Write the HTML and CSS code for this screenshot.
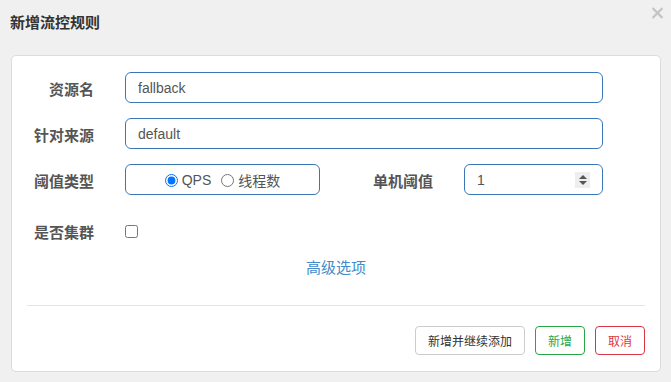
FILE: index.html
```html
<!DOCTYPE html>
<html lang="zh-CN">
<head>
  <meta charset="UTF-8">
  <meta name="viewport" content="width=device-width, initial-scale=1.0">
  <title>新增流控规则</title>
  <link rel="stylesheet" href="styles.css">
</head>
<body>
  <div class="modal">
    <div class="modal-header">
      <h4 class="modal-title">新增流控规则</h4>
      <button class="close" type="button" aria-label="关闭">
        <svg viewBox="0 0 12 12" width="11" height="12">
          <path d="M1.5 1.5l9 9M10.5 1.5l-9 9" stroke="currentColor" stroke-width="2.4" stroke-linecap="square"></path>
        </svg>
      </button>
    </div>

    <div class="modal-card">
      <form class="rule-form">
        <div class="form-row">
          <label class="control-label">资源名</label>
          <input class="form-control wide" type="text" value="fallback">
        </div>

        <div class="form-row">
          <label class="control-label">针对来源</label>
          <input class="form-control wide" type="text" value="default">
        </div>

        <div class="form-row">
          <label class="control-label">阈值类型</label>
          <div class="form-control radio-box">
            <label class="radio"><input type="radio" name="grade" checked>QPS</label>
            <label class="radio"><input type="radio" name="grade">线程数</label>
          </div>
          <label class="control-label label-second">单机阈值</label>
          <div class="number-wrap">
            <input class="form-control number" type="number" value="1">
            <span class="spinner">
              <span class="arrow up"></span>
              <span class="arrow down"></span>
            </span>
          </div>
        </div>

        <div class="form-row check-row">
          <label class="control-label">是否集群</label>
          <input class="check" type="checkbox">
        </div>

        <div class="advanced">
          <a class="advanced-link" href="#">高级选项</a>
        </div>
      </form>

      <div class="modal-footer">
        <button class="btn btn-default" type="button">新增并继续添加</button>
        <button class="btn btn-success" type="button">新增</button>
        <button class="btn btn-danger" type="button">取消</button>
      </div>
    </div>
  </div>
</body>
</html>
```

FILE: styles.css
```css
body {
  margin: 0;
  background: #f0f0f0;
  font-family: "Liberation Sans", "Noto Sans CJK SC", sans-serif;
  color: #333;
}

.modal {
  width: 671px;
  height: 382px;
}

.modal-header {
  position: relative;
  height: 55px;
  padding: 12px 10px 0;
  box-sizing: border-box;
}

.modal-title {
  margin: 0;
  font-size: 15px;
  line-height: 21px;
  font-weight: bold;
  color: #333;
}

.close {
  position: absolute;
  top: 7px;
  right: 8px;
  padding: 0;
  border: 0;
  background: none;
  color: #c4c4c4;
  display: flex;
}

.modal-card {
  margin: 0 10px 0 11px;
  background: #fff;
  border: 1px solid #dcdcdc;
  border-radius: 5px;
}

.rule-form {
  padding: 16px 15px 0;
}

.form-row {
  display: flex;
  align-items: flex-start;
  margin-bottom: 15px;
}

.control-label {
  width: 67px;
  margin-right: 31px;
  padding-top: 7px;
  font-size: 15px;
  line-height: 21px;
  font-weight: bold;
  color: #555;
  text-align: right;
  white-space: nowrap;
}

.label-second {
  width: 113px;
}

.form-control {
  height: 31px;
  box-sizing: border-box;
  padding: 0 12px;
  border: 1px solid #3a78b5;
  border-radius: 6px;
  font-family: "Liberation Sans", "Noto Sans CJK SC", sans-serif;
  font-size: 14px;
  color: #555;
  background: #fff;
  outline: none;
}

.wide {
  width: 478px;
}

.radio-box {
  width: 195px;
  display: flex;
  align-items: center;
  justify-content: center;
  gap: 10px;
  padding-top: 1px;
}

.radio {
  display: flex;
  align-items: center;
  font-size: 14px;
  color: #555;
}

.radio input {
  width: 13px;
  height: 13px;
  margin: 0 4px 0 0;
}

.number-wrap {
  position: relative;
}

.number {
  width: 139px;
  -moz-appearance: textfield;
}

.number::-webkit-inner-spin-button,
.number::-webkit-outer-spin-button {
  -webkit-appearance: none;
  margin: 0;
}

.spinner {
  position: absolute;
  top: 8px;
  right: 13px;
  width: 15px;
  height: 16px;
  background: #eee;
  display: flex;
  flex-direction: column;
  align-items: center;
  justify-content: center;
  gap: 2px;
}

.arrow {
  width: 0;
  height: 0;
  border-left: 4px solid transparent;
  border-right: 4px solid transparent;
}

.arrow.up {
  border-bottom: 4px solid #555;
}

.arrow.down {
  border-top: 4px solid #555;
}

.check-row {
  padding-top: 5px;
  margin-bottom: 0;
}

.check {
  width: 13px;
  height: 13px;
  margin: 10px 0 0;
}

.advanced {
  text-align: center;
  padding: 14px 0 27px;
}

.advanced-link {
  font-size: 15px;
  line-height: 21px;
  color: #428bca;
  text-decoration: none;
}

.modal-footer {
  margin: 0 15px;
  padding: 20px 0 16px;
  border-top: 1px solid #e5e5e5;
  display: flex;
  justify-content: flex-end;
  gap: 10px;
}

.btn {
  height: 29px;
  padding: 0 12px;
  border: 1px solid #ccc;
  border-radius: 4px;
  background: #fff;
  font-family: "Liberation Sans", "Noto Sans CJK SC", sans-serif;
  font-size: 12px;
  color: #333;
}

.btn-success {
  border-color: #28a745;
  color: #28a745;
}

.btn-danger {
  border-color: #dc3545;
  color: #dc3545;
}
```
